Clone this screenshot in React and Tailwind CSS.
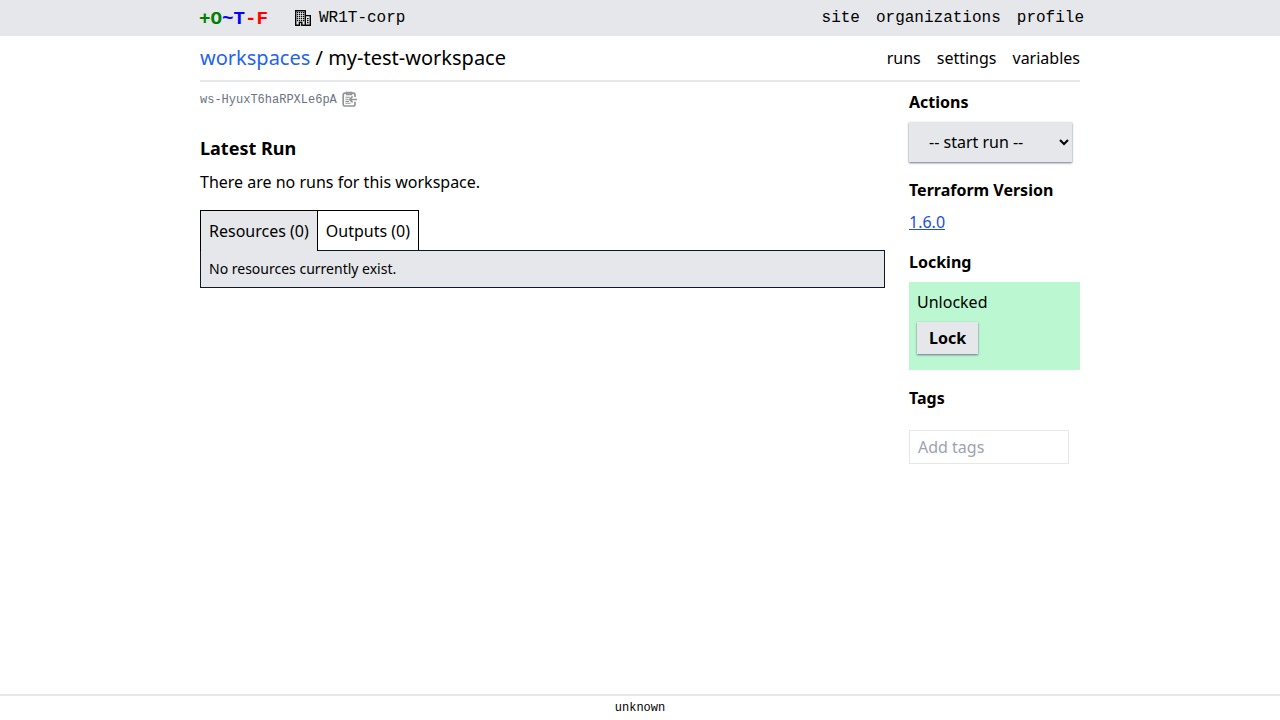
import React from "react";

function BuildingIcon() {
  return (
    <svg className="h-4 w-4" viewBox="0 0 16 16" fill="none">
      <path d="M.7 15.3V.7h9.6v14.6M10.3 5.6h5v9.7" stroke="#000" strokeWidth="1.4" />
      <path d="M0 15.3h4.4V12.4h2.4v2.9H16" stroke="#000" strokeWidth="1.4" />
      <path
        d="M2 2h1.2v1.2H2zM4 2h1.2v1.2H4zM6 2h1.2v1.2H6zM8 2h1.2v1.2H8zM2 4h1.2v1.2H2zM4 4h1.2v1.2H4zM6 4h1.2v1.2H6zM8 4h1.2v1.2H8zM2 6h1.2v1.2H2zM4 6h1.2v1.2H4zM6 6h1.2v1.2H6zM8 6h1.2v1.2H8zM2 8h1.2v1.2H2zM4 8h1.2v1.2H4zM6 8h1.2v1.2H6zM8 8h1.2v1.2H8zM2 10h1.2v1.2H2zM4 10h1.2v1.2H4zM6 10h1.2v1.2H6zM8 10h1.2v1.2H8zM12 8h1.5v1.2H12zM12 10h1.5v1.2H12zM12 12h1.5v1.2H12z"
        fill="#000"
      />
    </svg>
  );
}

function ClipboardIcon() {
  return (
    <svg className="h-4 w-4" viewBox="0 0 16 16" fill="none" stroke="#949494">
      <path
        d="M4.6 2.2H2.8A1.6 1.6 0 0 0 1.2 3.8v9.6A1.6 1.6 0 0 0 2.8 15h8.6a1.6 1.6 0 0 0 1.6-1.6v-2.6M13 6V3.8a1.6 1.6 0 0 0-1.6-1.6H9.6"
        strokeWidth="1.7"
      />
      <path d="M4.6 1.5h5v2h-5z" fill="#b5b5b5" strokeWidth="1.4" />
      <path d="M3.4 6.2h4.4M3.4 8.3h3M3.4 10.4h3.6M3.4 12.2h5.2" strokeWidth="1.1" />
      <path d="M15 8.4H8.1M10.6 5.4l-3 3 3 3" strokeWidth="1.5" />
    </svg>
  );
}

export default function App() {
  return (
    <div className="flex h-[720px] flex-col bg-white font-['Noto_Sans',sans-serif] text-base text-black">
      <header className="h-9 shrink-0 bg-gray-200 font-['Liberation_Mono',monospace]">
        <div className="mx-auto flex h-9 w-[884px] translate-x-0.5 items-center justify-between">
          <div className="flex items-center">
            <a className="-ml-px w-24 pt-0.5 text-[19.2px] leading-6 font-bold">
              <span className="text-[#008000]">+O</span>
              <span className="text-[#0000ff]">~T</span>
              <span className="text-[#ff0000]">-F</span>
            </a>
            <a className="flex items-center gap-2">
              <BuildingIcon />
              <span className="leading-6">WR1T-corp</span>
            </a>
          </div>
          <nav className="flex gap-4">
            <a>site</a>
            <a>organizations</a>
            <a>profile</a>
          </nav>
        </div>
      </header>

      <main className="mx-auto flex w-[880px] grow flex-col">
        <div className="flex h-[46px] items-center justify-between border-b-2 border-gray-200">
          <h1 className="text-xl">
            <a className="text-[#2563eb]">workspaces</a> / my-test-workspace
          </h1>
          <nav className="flex gap-4">
            <a>runs</a>
            <a>settings</a>
            <a>variables</a>
          </nav>
        </div>

        <div className="flex gap-6">
          <section className="w-[685px]">
            <div className="mt-2 flex h-[18px] items-center gap-[5px]">
              <span className="pt-0.5 font-['Liberation_Mono',monospace] text-xs text-[#6b7280]">
                ws-HyuxT6haRPXLe6pA
              </span>
              <ClipboardIcon />
            </div>
            <h3 className="mt-[26px] text-lg font-bold">Latest Run</h3>
            <p className="mt-2">There are no runs for this workspace.</p>
            <div className="mt-4 flex">
              <div className="relative z-10 -mb-px flex h-[41px] items-center border border-b-0 border-black bg-gray-200 px-2">
                Resources (0)
              </div>
              <div className="flex h-10 items-center border border-b-0 border-l-0 border-black px-2">
                <span className="pt-px">Outputs (0)</span>
              </div>
            </div>
            <div className="border border-[#0f172a] bg-gray-200 p-2 text-sm">No resources currently exist.</div>
          </section>

          <aside className="w-[171px] pt-2">
            <h5 className="font-bold">Actions</h5>
            <select className="mt-2 h-10 w-[163px] rounded-none bg-gray-200 px-4 shadow-[0_1px_2px_0_#64748b]">
              <option>-- start run --</option>
            </select>
            <h5 className="mt-4 font-bold">Terraform Version</h5>
            <a className="mt-2 block text-[#1d4ed8] underline">1.6.0</a>
            <h5 className="mt-4 font-bold">Locking</h5>
            <div className="mt-2 h-[88px] bg-[#bbf7d0] p-2">
              <div>Unlocked</div>
              <button className="mt-2 h-8 bg-gray-200 px-3 font-bold shadow-[0_1px_2px_0_#64748b]">
                Lock
              </button>
            </div>
            <h5 className="mt-4 font-bold">Tags</h5>
            <input
              className="mt-5 h-[34px] w-40 border border-gray-200 px-2 placeholder:text-[#9ca3af]"
              placeholder="Add tags"
            />
          </aside>
        </div>
      </main>

      <footer className="flex h-[26px] shrink-0 items-center justify-center border-t-2 border-gray-200 font-['Liberation_Mono',monospace] text-xs">
        unknown
      </footer>
    </div>
  );
}
